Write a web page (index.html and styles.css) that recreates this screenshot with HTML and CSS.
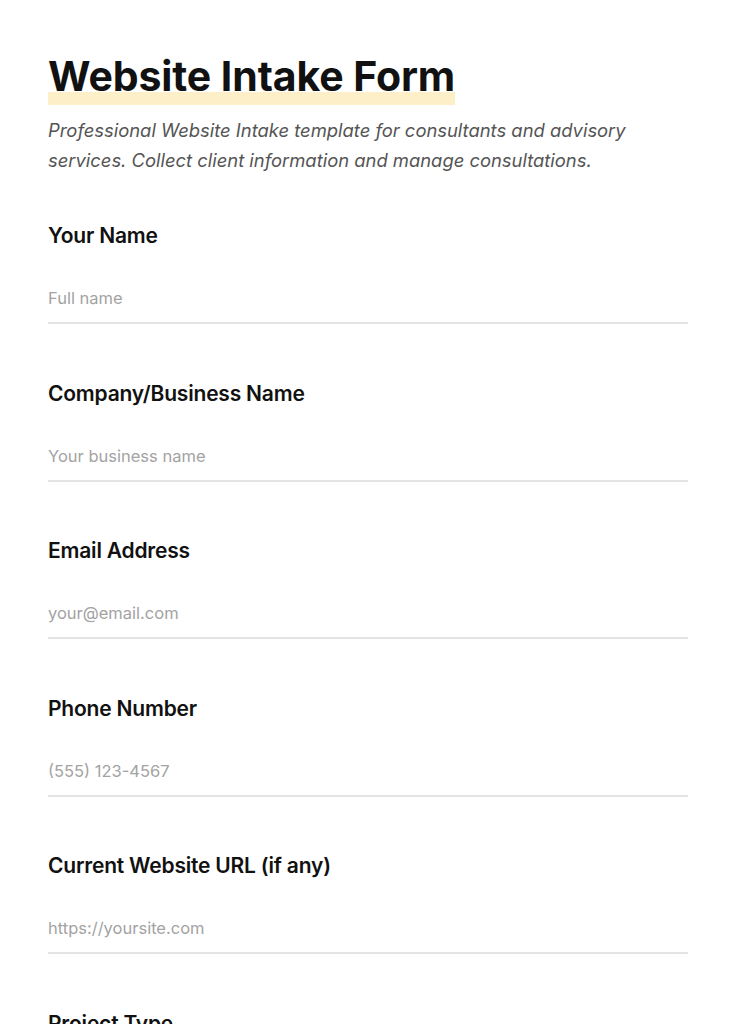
FILE: index.html
```html
<!DOCTYPE html>
<html lang="en">
<head>
    <meta charset="UTF-8">
    <meta name="viewport" content="width=device-width, initial-scale=1.0">
    <title>Website Intake Form</title>
    <link rel="stylesheet" href="styles.css">
</head>
<body>

    <div class="form_wrap">
        <h1 class="title"><span class="mark">Website Intake Form</span></h1>
        <p class="intro">Professional Website Intake template for consultants and advisory services. Collect client information and manage consultations.</p>

        <form class="intake">
            <div class="field">
                <label for="f_name">Your Name</label>
                <input type="text" id="f_name" placeholder="Full name">
            </div>
            <div class="field">
                <label for="f_company">Company/Business Name</label>
                <input type="text" id="f_company" placeholder="Your business name">
            </div>
            <div class="field">
                <label for="f_email">Email Address</label>
                <input type="email" id="f_email" placeholder="your@email.com">
            </div>
            <div class="field">
                <label for="f_phone">Phone Number</label>
                <input type="tel" id="f_phone" placeholder="(555) 123-4567">
            </div>
            <div class="field">
                <label for="f_url">Current Website URL (if any)</label>
                <input type="text" id="f_url" placeholder="https://yoursite.com">
            </div>
            <div class="field">
                <label for="f_type">Project Type</label>
                <input type="text" id="f_type" placeholder="Select a project type">
            </div>
        </form>
    </div>

</body>
</html>
```

FILE: styles.css
```css
body {
    margin: 0;
    background: #fff;
    color: #111;
    font-family: "Inter", "Liberation Sans", sans-serif;
}
.form_wrap {
    padding: 52px 48px 48px 48px;
}

.title {
    margin: 0;
    font-size: 41px;
    line-height: 48px;
    font-weight: 700;
    letter-spacing: -0.1px;
    color: #111;
}
.title .mark {
    display: inline-block;
    padding-bottom: 5px;
    background: linear-gradient(to top, #fdf0c8 13px, transparent 13px);
}

.intro {
    margin: 10px 0 0 0;
    font-size: 18.4px;
    line-height: 30px;
    font-style: italic;
    color: #555;
}

.intake {
    margin-top: 47px;
}
.field {
    margin-bottom: 55.5px;
}
.field label {
    display: block;
    font-size: 21px;
    line-height: 28px;
    font-weight: 600;
    letter-spacing: -0.2px;
    color: #111;
}
.field input {
    display: block;
    box-sizing: border-box;
    width: 100%;
    margin-top: 24px;
    padding: 12px 0;
    border: none;
    border-bottom: 2px solid #e4e4e4;
    font-family: inherit;
    font-size: 16.5px;
    line-height: 24px;
    color: #111;
    background: transparent;
    outline: none;
}
.field input::placeholder {
    color: #a3a3a3;
}
```
